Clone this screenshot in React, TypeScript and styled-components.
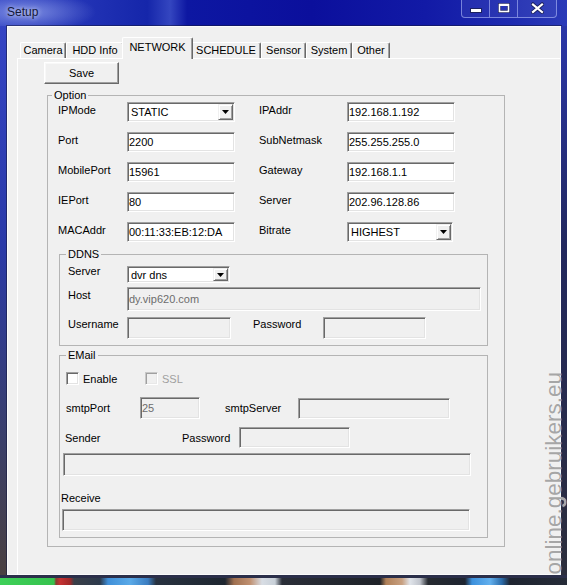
import React from "react";
import styled, { createGlobalStyle } from "styled-components";

const FONT = `"Liberation Sans", Arial, sans-serif`;

const GlobalStyle = createGlobalStyle`
  html, body { margin: 0; padding: 0; background: #10144a; }
  #root { width: 567px; height: 585px; }
`;

const Window = styled.div`
  position: relative;
  width: 567px;
  height: 585px;
  display: flex;
  flex-direction: column;
  overflow: hidden;
  font-family: ${FONT};
  font-size: 11px;
  color: #000;
  background: #1a2290;
`;

const TitleBar = styled.div`
  flex: none;
  height: 26px;
  box-sizing: border-box;
  display: flex;
  justify-content: space-between;
  align-items: flex-start;
  padding: 0 10px 0 7px;
  background:
    radial-gradient(ellipse 70px 20px at 26px 12px, rgba(190, 205, 255, 0.55), rgba(190, 205, 255, 0) 100%),
    linear-gradient(90deg, #3143c3 0%, #2536b8 12%, #1526aa 26%, #3446c0 30%, #0d17a2 33%, #0b0f9c 55%, #121aa6 75%, #1d2ab0 90%, #2a3ab8 100%);
`;

const Title = styled.div`
  margin-top: 5px;
  font-family: ${FONT};
  font-size: 12px;
  line-height: 14px;
  color: #14183a;
  text-shadow: 0 0 5px rgba(255, 255, 255, 0.8);
`;

const CaptionGroup = styled.div`
  display: flex;
  height: 18px;
  margin-top: -1px;
  border: 1px solid rgba(190, 200, 255, 0.55);
  border-top: none;
  border-radius: 0 0 4px 4px;
  background: rgba(255, 255, 255, 0.06);
`;

const CaptionButton = styled.div<{ $w: number }>`
  width: ${(p) => p.$w}px;
  display: flex;
  align-items: center;
  justify-content: center;
  & + & {
    border-left: 1px solid rgba(190, 200, 255, 0.55);
  }
`;

const Body = styled.div`
  flex: none;
  height: 549px;
  display: flex;
`;

const SideFrame = styled.div<{ $w: number; $bg: string }>`
  flex: none;
  width: ${(p) => p.$w}px;
  background: ${(p) => p.$bg};
`;

const Client = styled.div`
  flex: 1;
  box-sizing: border-box;
  background: #f0f0f0;
  border: 1px solid #fbfbfb;
  box-shadow: 0 0 0 1px rgba(20, 24, 60, 0.55);
  padding: 10px 0 0 9px;
  overflow: hidden;
`;

const FrameEdge = styled.div`
  flex: none;
  height: 3px;
  background: #2b2f4a;
`;

const TaskStrip = styled.div`
  flex: none;
  height: 7px;
  background: linear-gradient(
    90deg,
    #3ed058 0px, #36c24e 54px, #8a3a30 56px, #c63232 60px, #a02828 70px, #3a3f48 74px,
    #2c3a4c 100px, #3f8fd8 108px, #5aaae8 130px, #3a7cc0 148px, #283240 156px,
    #1e2630 225px, #a07050 234px, #c09070 250px, #d8dde4 262px, #c8d0d8 275px, #2a2e38 282px,
    #1e2228 380px, #b08058 386px, #c8a080 402px, #e0e4ea 410px, #c0c4cc 420px, #262a30 428px,
    #1e2430 465px, #3c90dc 472px, #62b0ee 490px, #2a6aa8 502px, #1e2430 510px, #262c38 567px
  );
`;

const TabControl = styled.div`
  width: 560px;
  flex: none;
  display: flex;
  flex-direction: column;
`;

const TabStrip = styled.div`
  height: 21px;
  display: flex;
  align-items: flex-end;
  padding-left: 3px;
`;

const Tab = styled.div<{ $w: number; $active?: boolean }>`
  box-sizing: border-box;
  flex: none;
  position: relative;
  z-index: ${(p) => (p.$active ? 1 : 0)};
  width: ${(p) => (p.$active ? p.$w + 4 : p.$w)}px;
  height: ${(p) => (p.$active ? 22 : 16)}px;
  margin: 0 ${(p) => (p.$active ? -2 : 0)}px ${(p) => (p.$active ? -1 : 0)}px;
  padding-bottom: ${(p) => (p.$active ? 3 : 0)}px;
  background: #f0f0f0;
  border-top: 1px solid #ffffff;
  border-left: 1px solid #ffffff;
  border-right: 1px solid #696969;
  box-shadow: inset -1px 0 #a0a0a0;
  border-radius: 2px 2px 0 0;
  display: flex;
  align-items: center;
  justify-content: center;
  font-size: 11px;
  line-height: 13px;
  white-space: nowrap;
`;

const TabPanel = styled.div`
  box-sizing: border-box;
  height: 560px;
  border: 1px solid;
  border-color: #ffffff #696969 #696969 #ffffff;
  box-shadow: inset -1px -1px #a0a0a0;
  background: #f0f0f0;
  display: flex;
  flex-direction: column;
  align-items: flex-start;
`;

const Button = styled.button`
  box-sizing: border-box;
  width: 75px;
  height: 22px;
  margin: 3px 0 0 26px;
  padding: 0;
  background: #f0f0f0;
  border: 1px solid;
  border-color: #ffffff #696969 #696969 #ffffff;
  box-shadow: inset -1px -1px #a0a0a0, inset 1px 1px #f8f8f8;
  font-family: ${FONT};
  font-size: 11px;
  color: #000;
`;

const Group = styled.fieldset<{ $w: number; $mt: number; $ml: number; $pb: number }>`
  box-sizing: border-box;
  width: ${(p) => p.$w}px;
  margin: ${(p) => p.$mt}px 0 0 ${(p) => p.$ml}px;
  padding: 0 0 ${(p) => p.$pb}px 0;
  min-inline-size: 0;
  border: 1px solid #b4b4b4;
  display: flex;
  flex-direction: column;
  align-items: flex-start;
`;

const Legend = styled.legend<{ $ml: number }>`
  margin-left: ${(p) => p.$ml}px;
  padding: 0 2px 0 2px;
  font-size: 11px;
  line-height: 14px;
`;

const OptionGrid = styled.div`
  display: grid;
  grid-template-columns: 69px 108px 112px 108px;
  grid-auto-rows: 20px;
  row-gap: 10px;
  padding-left: 10px;
`;

const GridLabel = styled.span<{ $right?: boolean }>`
  padding: 1px 0 0 ${(p) => (p.$right ? 24 : 0)}px;
  line-height: 14px;
  white-space: nowrap;
`;

const TextBox = styled.input<{ $w: number; $h: number; $ml?: number; $mt?: number }>`
  box-sizing: border-box;
  flex: none;
  width: ${(p) => p.$w}px;
  height: ${(p) => p.$h}px;
  margin: ${(p) => p.$mt ?? 0}px 0 0 ${(p) => p.$ml ?? 0}px;
  padding: 0 0 0 1px;
  border: 1px solid;
  border-color: #a0a0a0 #ffffff #ffffff #a0a0a0;
  box-shadow: inset 1px 1px #696969, inset -1px -1px #e3e3e3;
  background: #ffffff;
  color: #000;
  font-family: ${FONT};
  font-size: 11px;
  outline: none;
  &:disabled {
    background: #f0f0f0;
    color: #6d6d6d;
  }
`;

const Combo = styled.div<{ $w: number; $h: number }>`
  box-sizing: border-box;
  width: ${(p) => p.$w}px;
  height: ${(p) => p.$h}px;
  display: flex;
  align-items: stretch;
  justify-content: space-between;
  padding: 1px 1px 1px 3px;
  border: 1px solid;
  border-color: #a0a0a0 #ffffff #ffffff #a0a0a0;
  box-shadow: inset 1px 1px #696969, inset -1px -1px #e3e3e3;
  background: #ffffff;
`;

const ComboText = styled.span`
  align-self: center;
  white-space: nowrap;
  font-size: 11px;
`;

const DropButton = styled.span`
  box-sizing: border-box;
  width: 15px;
  background: #f0f0f0;
  border: 1px solid;
  border-color: #f0f0f0 #696969 #696969 #f0f0f0;
  box-shadow: inset 1px 1px #ffffff, inset -1px -1px #a0a0a0;
  display: flex;
  align-items: center;
  justify-content: center;
`;

const Row = styled.div<{ $mt?: number; $ml?: number; $h?: number; $center?: boolean }>`
  display: flex;
  align-items: ${(p) => (p.$center ? "center" : "flex-start")};
  margin: ${(p) => p.$mt ?? 0}px 0 0 ${(p) => p.$ml ?? 0}px;
  ${(p) => (p.$h ? `height: ${p.$h}px;` : "")}
`;

const FieldLabel = styled.span<{ $w?: number; $ml?: number; $mt?: number; $muted?: boolean }>`
  flex: none;
  ${(p) => (p.$w ? `width: ${p.$w}px;` : "")}
  margin: ${(p) => p.$mt ?? 0}px 0 0 ${(p) => p.$ml ?? 0}px;
  line-height: 14px;
  white-space: nowrap;
  color: ${(p) => (p.$muted ? "#a0a0a0" : "#000")};
`;

const CheckItem = styled.label<{ $w?: number }>`
  display: flex;
  align-items: center;
  gap: 4px;
  ${(p) => (p.$w ? `width: ${p.$w}px;` : "")}
`;

const CheckBox = styled.input`
  appearance: none;
  box-sizing: border-box;
  width: 13px;
  height: 13px;
  margin: 0;
  border: 1px solid;
  border-color: #a0a0a0 #ffffff #ffffff #a0a0a0;
  box-shadow: inset 1px 1px #696969, inset -1px -1px #e3e3e3;
  background: #ffffff;
  &:disabled {
    border-color: #c8c8c8 #ffffff #ffffff #c8c8c8;
    box-shadow: inset 1px 1px #a0a0a0, inset -1px -1px #e8e8e8;
    background: #f0f0f0;
  }
`;

const Watermark = styled.div`
  position: absolute;
  left: 449px;
  top: 459px;
  width: 208px;
  height: 23px;
  transform: rotate(-90deg);
  font-family: ${FONT};
  font-size: 22.5px;
  line-height: 23px;
  color: #a6a6a6;
  white-space: nowrap;
  text-shadow: 0 0 1px #ffffff;
  pointer-events: none;
`;

const Arrow = () => (
  <svg width="7" height="4" viewBox="0 0 7 4">
    <polygon points="0,0 7,0 3.5,4" fill="#000" />
  </svg>
);

const MinIcon = () => (
  <svg width="12" height="12" viewBox="0 0 12 12">
    <rect x="0.5" y="6.5" width="11" height="4" fill="#fff" stroke="#1b2060" strokeWidth="1" />
  </svg>
);

const MaxIcon = () => (
  <svg width="12" height="12" viewBox="0 0 12 12">
    <rect x="1.5" y="2.5" width="9" height="7" fill="none" stroke="#1b2060" strokeWidth="3" />
    <rect x="1.5" y="2.5" width="9" height="7" fill="none" stroke="#fff" strokeWidth="1.6" />
    <rect x="1" y="2" width="10" height="2" fill="#fff" />
  </svg>
);

const CloseIcon = () => (
  <svg width="13" height="12" viewBox="0 0 13 12">
    <path d="M2 2.5 L11 10 M11 2.5 L2 10" stroke="#1b2060" strokeWidth="4" strokeLinecap="square" />
    <path d="M2 2.5 L11 10 M11 2.5 L2 10" stroke="#fff" strokeWidth="2.2" strokeLinecap="square" />
  </svg>
);

const tabs = [
  { label: "Camera", w: 46 },
  { label: "HDD Info", w: 58 },
  { label: "NETWORK", w: 67, active: true },
  { label: "SCHEDULE", w: 70 },
  { label: "Sensor", w: 45 },
  { label: "System", w: 46 },
  { label: "Other", w: 38 },
];

type Cell =
  | { kind: "text"; value: string }
  | { kind: "combo"; value: string; w: number };

const optionRows: { left: string; leftCell: Cell; right: string; rightCell: Cell }[] = [
  { left: "IPMode", leftCell: { kind: "combo", value: "STATIC", w: 108 }, right: "IPAddr", rightCell: { kind: "text", value: "192.168.1.192" } },
  { left: "Port", leftCell: { kind: "text", value: "2200" }, right: "SubNetmask", rightCell: { kind: "text", value: "255.255.255.0" } },
  { left: "MobilePort", leftCell: { kind: "text", value: "15961" }, right: "Gateway", rightCell: { kind: "text", value: "192.168.1.1" } },
  { left: "IEPort", leftCell: { kind: "text", value: "80" }, right: "Server", rightCell: { kind: "text", value: "202.96.128.86" } },
  { left: "MACAddr", leftCell: { kind: "text", value: "00:11:33:EB:12:DA" }, right: "Bitrate", rightCell: { kind: "combo", value: "HIGHEST", w: 106 } },
];

const renderCell = (c: Cell) =>
  c.kind === "combo" ? (
    <Combo $w={c.w} $h={20}>
      <ComboText>{c.value}</ComboText>
      <DropButton>
        <Arrow />
      </DropButton>
    </Combo>
  ) : (
    <TextBox $w={108} $h={20} readOnly defaultValue={c.value} />
  );

export default function App() {
  return (
    <>
      <GlobalStyle />
      <Window>
        <TitleBar>
          <Title>Setup</Title>
          <CaptionGroup>
            <CaptionButton $w={27}>
              <MinIcon />
            </CaptionButton>
            <CaptionButton $w={27}>
              <MaxIcon />
            </CaptionButton>
            <CaptionButton $w={38}>
              <CloseIcon />
            </CaptionButton>
          </CaptionGroup>
        </TitleBar>
        <Body>
          <SideFrame $w={7} $bg="linear-gradient(180deg, #3444c4 0%, #2a3aa8 40%, #3a3f6a 75%, #4a4040 100%)" />
          <Client>
            <TabControl>
              <TabStrip>
                {tabs.map((t) => (
                  <Tab key={t.label} $w={t.w} $active={t.active}>
                    {t.label}
                  </Tab>
                ))}
              </TabStrip>
              <TabPanel>
                <Button>Save</Button>
                <Group $w={458} $mt={4} $ml={29} $pb={8}>
                  <Legend $ml={4}>Option</Legend>
                  <OptionGrid>
                    {optionRows.map((r) => (
                      <React.Fragment key={r.left}>
                        <GridLabel>{r.left}</GridLabel>
                        {renderCell(r.leftCell)}
                        <GridLabel $right>{r.right}</GridLabel>
                        {renderCell(r.rightCell)}
                      </React.Fragment>
                    ))}
                  </OptionGrid>

                  <Group $w={429} $mt={5} $ml={11} $pb={6}>
                    <Legend $ml={6}>DDNS</Legend>
                    <Row $mt={5} $ml={8}>
                      <FieldLabel $w={59} $mt={-2}>Server</FieldLabel>
                      <Combo $w={103} $h={17}>
                        <ComboText>dvr dns</ComboText>
                        <DropButton>
                          <Arrow />
                        </DropButton>
                      </Combo>
                    </Row>
                    <Row $mt={4} $ml={8}>
                      <FieldLabel $w={59} $mt={1}>Host</FieldLabel>
                      <TextBox $w={354} $h={24} disabled defaultValue="dy.vip620.com" />
                    </Row>
                    <Row $mt={6} $ml={8}>
                      <FieldLabel $w={59}>Username</FieldLabel>
                      <TextBox $w={104} $h={22} disabled />
                      <FieldLabel $w={70} $ml={22}>Password</FieldLabel>
                      <TextBox $w={103} $h={22} disabled />
                    </Row>
                  </Group>

                  <Group $w={429} $mt={2} $ml={11} $pb={6}>
                    <Legend $ml={6}>EMail</Legend>
                    <Row $mt={10} $ml={6} $h={13} $center>
                      <CheckItem $w={79}>
                        <CheckBox type="checkbox" />
                        <span>Enable</span>
                      </CheckItem>
                      <CheckItem>
                        <CheckBox type="checkbox" disabled />
                        <FieldLabel $muted>SSL</FieldLabel>
                      </CheckItem>
                    </Row>
                    <Row $mt={12} $ml={6} $h={22} $center>
                      <FieldLabel $w={74}>smtpPort</FieldLabel>
                      <TextBox $w={60} $h={22} disabled defaultValue="25" />
                      <FieldLabel $w={73} $ml={25}>smtpServer</FieldLabel>
                      <TextBox $w={152} $h={21} disabled />
                    </Row>
                    <Row $mt={8} $ml={5} $h={21} $center>
                      <FieldLabel $w={117}>Sender</FieldLabel>
                      <FieldLabel $w={57}>Password</FieldLabel>
                      <TextBox $w={111} $h={21} disabled />
                    </Row>
                    <TextBox $w={408} $h={23} $ml={3} $mt={5} disabled />
                    <FieldLabel $ml={1} $mt={15}>Receive</FieldLabel>
                    <TextBox $w={408} $h={22} $ml={2} $mt={4} disabled />
                  </Group>
                </Group>
              </TabPanel>
            </TabControl>
          </Client>
          <SideFrame $w={6} $bg="linear-gradient(180deg, #2a36a8 0%, #22285e 40%, #2c2e3c 100%)" />
        </Body>
        <FrameEdge />
        <TaskStrip />
        <Watermark>online.gebruikers.eu</Watermark>
      </Window>
    </>
  );
}
